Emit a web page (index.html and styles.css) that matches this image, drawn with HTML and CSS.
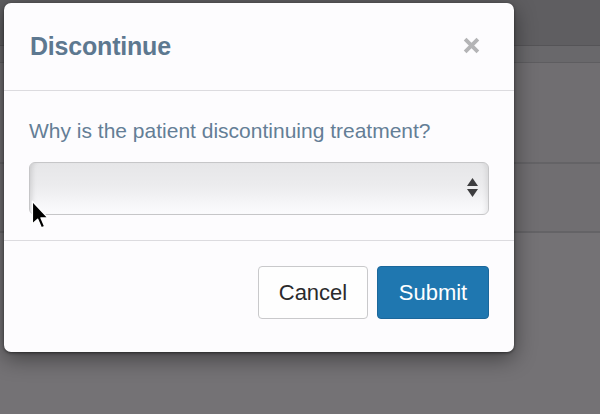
FILE: index.html
```html
<!DOCTYPE html>
<html>
<head>
<meta charset="utf-8">
<link rel="stylesheet" href="styles.css">
</head>
<body>
<div class="page">
  <div class="bg-top"></div>
  <div class="bg-band"></div>
  <div class="bg-row bg-row1"></div>
  <div class="bg-row bg-row2"></div>
  <div class="bg-rest"></div>
</div>
<div class="modal">
  <div class="modal-header">
    <h4 class="modal-title">Discontinue</h4>
    <svg class="close" width="17" height="17" viewBox="0 0 16 16"><path d="M2 2 L14 14 M14 2 L2 14" stroke="#b4b4b6" stroke-width="3.6" stroke-linecap="butt"/></svg>
  </div>
  <div class="modal-body">
    <p class="question">Why is the patient discontinuing treatment?</p>
    <div class="select">
      <svg class="arrows" width="11" height="20" viewBox="0 0 11 20"><path d="M5.5 0 L11 8 L0 8 Z M0 11 L11 11 L5.5 19 Z" fill="#3d3d3f"/></svg>
    </div>
  </div>
  <div class="modal-footer">
    <button class="btn btn-default">Cancel</button>
    <button class="btn btn-primary">Submit</button>
  </div>
</div>
<svg class="cursor" width="20" height="32" viewBox="0 0 16 26"><path d="M1 1 L1 19.5 L5.3 15.6 L8.3 22.6 L11 21.5 L8 14.6 L13.8 14.6 Z" fill="#000" stroke="#fff" stroke-width="1.1" stroke-linejoin="round"/></svg>
</body>
</html>
```
FILE: styles.css
```css
html, body {
  margin: 0;
  padding: 0;
}
body {
  width: 600px;
  height: 414px;
  overflow: hidden;
  background: #727073;
  font-family: "Liberation Sans", Arial, sans-serif;
  position: relative;
}
.page {
  display: flex;
  flex-direction: column;
  height: 414px;
}
.bg-top {
  height: 45px;
  background: #5f5e61;
  border-bottom: 1px solid #555457;
}
.bg-band {
  height: 16px;
  background: #69686b;
  border-bottom: 1px solid #5e5d60;
}
.bg-row {
  background: #706e71;
  border-bottom: 2px solid #646366;
}
.bg-row1 { height: 99px; }
.bg-row2 { height: 67px; }
.bg-rest {
  flex: 1;
  background: #747275;
}
.modal {
  position: absolute;
  left: 4px;
  top: 3px;
  width: 510px;
  height: 349px;
  background: #fdfcfe;
  border-radius: 7px;
  box-shadow: 0 6px 22px rgba(0, 0, 0, 0.45), 0 1px 3px rgba(0, 0, 0, 0.5);
  display: flex;
  flex-direction: column;
}
.modal-header {
  height: 87px;
  padding: 0 34px 0 25px;
  display: flex;
  align-items: center;
  justify-content: space-between;
  border-bottom: 1px solid #dcdbdf;
}
.modal-title {
  margin: 0 0 0 1px;
  font-size: 25px;
  font-weight: bold;
  color: #5d7890;
  letter-spacing: -0.2px;
}
.close {
  display: block;
  margin-bottom: 2px;
}
.modal-body {
  padding: 28px 25px 25px;
  border-bottom: 1px solid #dcdbdf;
}
.question {
  margin: 0 0 19px;
  font-size: 21px;
  line-height: 24px;
  color: #647e96;
}
.select {
  height: 51px;
  border: 1px solid #c6c6c8;
  border-radius: 6px;
  background: linear-gradient(to bottom, #e6e6e8 0%, #ececee 45%, #f6f6f8 80%, #fbfbfd 100%);
  box-shadow: inset 6px 0 5px -4px rgba(0, 0, 0, 0.12), inset -6px 0 5px -4px rgba(0, 0, 0, 0.08);
  display: flex;
  align-items: center;
  justify-content: flex-end;
  padding-right: 10px;
}
.arrows {
  display: block;
  margin-bottom: 1px;
}
.modal-footer {
  flex: 1;
  padding: 25px 25px 0;
  display: flex;
  justify-content: flex-end;
  align-items: flex-start;
  gap: 9px;
}
.btn {
  height: 53px;
  border-radius: 4px;
  font-family: "Liberation Sans", Arial, sans-serif;
  font-size: 22px;
  padding: 0;
  cursor: pointer;
}
.btn-default {
  width: 110px;
  background: #fefefe;
  border: 1px solid #c9c9cb;
  color: #2a2a2c;
}
.btn-primary {
  width: 112px;
  background: #1f77b0;
  border: 1px solid #1b679b;
  color: #ffffff;
}
.cursor {
  position: absolute;
  left: 31px;
  top: 200px;
}
```
